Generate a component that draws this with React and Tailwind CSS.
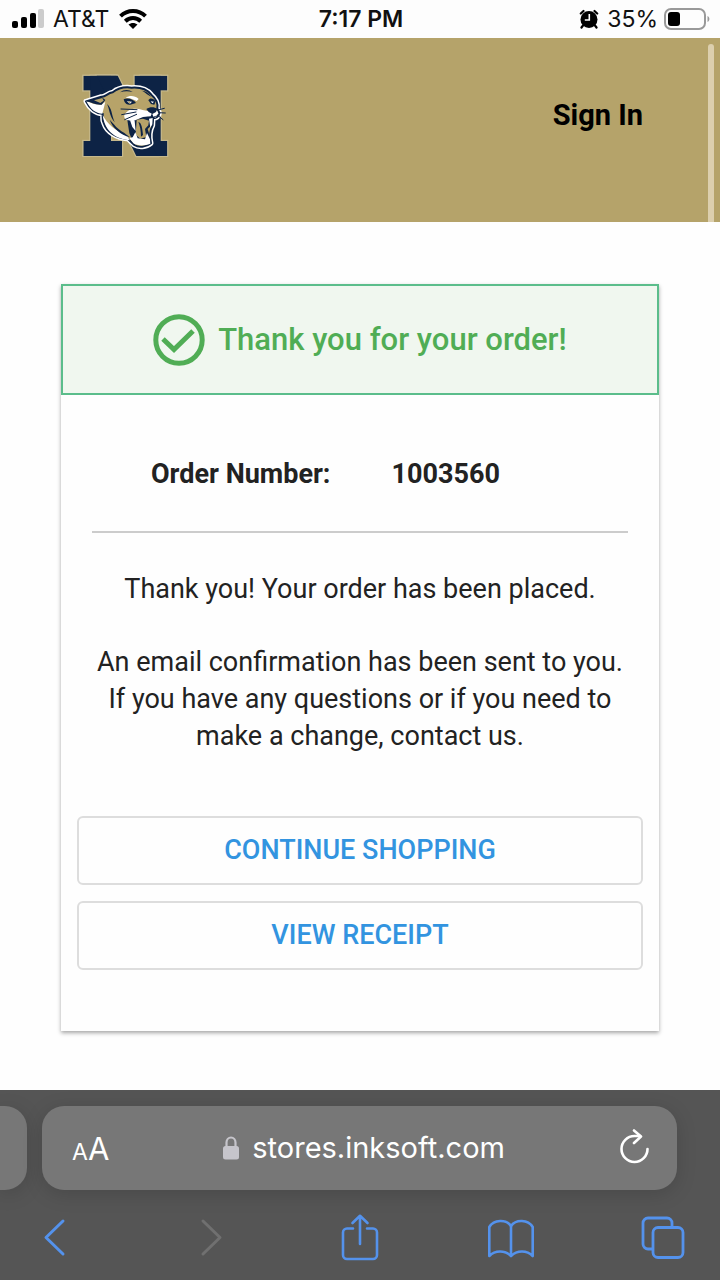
import React from 'react';

const tabs = [
  { id: 'back', label: 'Back', icon: <BackIcon /> },
  { id: 'forward', label: 'Forward', icon: <ForwardIcon />, disabled: true },
  { id: 'share', label: 'Share', icon: <ShareIcon /> },
  { id: 'bookmarks', label: 'Bookmarks', icon: <BookIcon /> },
  { id: 'tabs', label: 'Tabs', icon: <TabsIcon /> },
];

function BackIcon() {
  return (
    <svg width="48" height="48" viewBox="0 0 48 48" fill="none" stroke="currentColor" strokeWidth="3" strokeLinecap="round" strokeLinejoin="round">
      <path d="M31 8 14 24.5 31 41" />
    </svg>
  );
}

function ForwardIcon() {
  return (
    <svg width="48" height="48" viewBox="0 0 48 48" fill="none" stroke="currentColor" strokeWidth="3" strokeLinecap="round" strokeLinejoin="round">
      <path d="M19 8 36 24.5 19 41" />
    </svg>
  );
}

function ShareIcon() {
  return (
    <svg width="48" height="48" viewBox="0 0 48 48" fill="none" stroke="currentColor" strokeWidth="2.6" strokeLinecap="round" strokeLinejoin="round">
      <path d="M17 15.500H11a4 4 0 0 0-4 4V42a4 4 0 0 0 4 4h26a4 4 0 0 0 4-4V19.500a4 4 0 0 0-4-4h-6" />
      <path d="M24 31V3M16.500 10 24 2.800 31.500 10" />
    </svg>
  );
}

function BookIcon() {
  return (
    <svg width="48" height="48" viewBox="0 0 48 48" fill="none" stroke="currentColor" strokeWidth="2.6" strokeLinejoin="round">
      <path d="M23 13C18 6 6 6.500 1.300 14V43C7 37 17 37 23 43 29 37 39 37 44.700 43V14C40 6.500 28 6 23 13Z" />
      <path d="M23 13V43" />
    </svg>
  );
}

function TabsIcon() {
  return (
    <svg width="48" height="48" viewBox="0 0 48 48" fill="none" stroke="currentColor" strokeWidth="2.800">
      <path d="M12 36H8a5 5 0 0 1-5-5V10a5 5 0 0 1 5-5H27a5 5 0 0 1 5 5V14" />
      <rect x="13" y="14.500" width="30" height="30" rx="5" />
    </svg>
  );
}

function SchoolLogo() {
  return (
    <svg width="90" height="88" viewBox="30 28 270 264" role="img" aria-label="School logo">
      <clipPath id="block-inner">
        <rect x="40" y="39" width="252" height="241" />
      </clipPath>
      <clipPath id="block-outer">
        <rect x="36" y="35" width="260" height="249" />
      </clipPath>
      {/* block monogram with its thin light edge */}
      <g fill="#c6b98c" stroke="#c6b98c" strokeWidth="7" clipPath="url(#block-outer)">
        <rect x="40" y="39" width="98" height="44" />
        <rect x="61" y="39" width="62" height="240" />
        <rect x="40" y="235" width="116" height="45" />
        <rect x="194" y="39" width="98" height="44" />
        <rect x="210" y="39" width="62" height="240" />
        <rect x="206" y="235" width="86" height="45" />
        <line x1="102" y1="19" x2="240" y2="300" strokeWidth="63" />
      </g>
      <g fill="#0d2345" clipPath="url(#block-inner)">
        <rect x="40" y="39" width="98" height="44" />
        <rect x="61" y="39" width="62" height="240" />
        <rect x="40" y="235" width="116" height="45" />
        <rect x="194" y="39" width="98" height="44" />
        <rect x="210" y="39" width="62" height="240" />
        <rect x="206" y="235" width="86" height="45" />
        <line x1="102" y1="19" x2="240" y2="300" stroke="#0d2345" strokeWidth="56" />
      </g>
      {/* cougar head */}
      <g strokeLinejoin="round">
        {[['#fff', 15], ['#0d2345', 6]].map(([color, width]) => (
          <path
            key={color}
            d="M48 116 94 102 C106 104 112 91 128 89 C144 76 163 72 185 75 C213 73 233 82 244 96 C258 108 265 121 262 137 L268 151 C266 163 258 166 249 167 L248 188 C239 205 239 225 243 242 C229 254 205 255 193 247 L174 229 C137 225 110 207 102 183 C95 171 99 163 98 153 C78 154 59 139 48 116Z"
            fill="#b7a369"
            stroke={color}
            strokeWidth={width}
          />
        ))}
      </g>
      <path d="M49 116C63 120 73 127 94 126L106 117 97 153C78 153 61 140 49 116Z" fill="#fff" />
      <path d="M48 115 94 102 106 112 95 126C77 128 63 119 48 115Z" fill="#0d2345" />
      <path d="M72 113 97 106 101 114 91 121Z" fill="#b7a369" />
      <path d="M98 157C112 184 137 206 169 216L180 233C141 229 105 210 98 157Z" fill="#fff" />
      <path d="M162 210C144 201 132 185 119 171 129 198 151 215 180 224Z" fill="#0d2345" />
      <path d="M111 124C119 139 117 158 134 179 123 151 127 139 111 124Z" fill="#0d2345" />
      <path d="M150 89C160 80 177 79 188 88 176 85 162 85 150 89Z" fill="#0d2345" />
      <path d="M167 105C178 98 194 98 206 109L200 115 180 107Z" fill="#fff" />
      <path d="M161 110C172 104 190 109 198 121L181 126C169 128 163 120 161 110Z" fill="#0d2345" />
      <path d="M170 116 186 117 180 123Z" fill="#fff" />
      <circle cx="178" cy="119" r="3" fill="#b7a369" />
      <path d="M235 113C241 103 251 109 257 116L253 126 243 124Z" fill="#0d2345" />
      <path d="M242 116 252 117 247 122Z" fill="#fff" />
      <path d="M214 84C225 83 238 92 243 102L231 95C226 90 221 86 214 84Z" fill="#0d2345" />
      <path d="M163 157C174 138 194 134 218 142L237 146 259 142 266 151 256 165 231 162 194 176C176 177 160 172 163 157Z" fill="#fff" />
      <path d="M229 139C239 132 254 132 262 139L258 148 247 154 236 148Z" fill="#0d2345" />
      <path d="M246 151 242 161 219 163 189 176 172 172 178 212 188 235 225 239 240 233 239 218 233 199 249 183 253 165 262 158 250 162Z" fill="#0d2345" />
      <path d="M200 171 219 168 237 174 235 188 225 199 229 223 211 228 197 216Z" fill="#b7a369" />
      <path d="M205 178C215 180 217 197 219 217L213 222C213 204 210 190 205 178Z" fill="#0d2345" />
      <path d="M180 173 194 175 197 205 187 193ZM237 168 248 166 247 185 241 195ZM188 224 196 209 203 227 225 230 231 211 240 230 241 243C224 250 202 250 190 242L178 226Z" fill="#fff" />
      <g stroke="#0d2345" strokeWidth="3" strokeLinecap="round" fill="none">
        <path d="M201 141 153 139M198 148 155 156M200 155 164 171" />
        <path d="M264 142 283 137M265 150 286 151M262 157 279 171" />
      </g>
    </svg>
  );
}

function StatusBar() {
  return (
    <div className="grid h-[38px] grid-cols-3 items-center bg-[#fdfdfd] pl-3 pr-[10px] font-['Inter',sans-serif] text-[23px] leading-7 text-[#111]">
      <div className="flex items-center gap-[9px]">
        <svg width="32" height="20" viewBox="0 0 32 20" fill="#000">
          <rect x="0" y="12" width="6" height="7" rx="2" />
          <rect x="9" y="8" width="6" height="11" rx="2" />
          <rect x="18" y="4" width="6" height="15" rx="2" />
          <rect x="26" y="0" width="6" height="19" rx="2" fill="#ccc" />
        </svg>
        <span>AT&amp;T</span>
        <svg width="30" height="22" viewBox="0 0 30 22" fill="none" stroke="#000" strokeWidth="4">
          <path d="M2.500 8.200C9.500 1.300 20.500 1.300 27.500 8.200" />
          <path d="M7.300 13.200C11.700 9 18.300 9 22.700 13.200" />
          <path d="M15 21 10.500 16.600C13 14.500 17 14.500 19.500 16.600Z" fill="#000" stroke="none" />
        </svg>
      </div>
      <div className="text-center font-semibold">7:17 PM</div>
      <div className="flex items-center justify-end gap-2">
        <svg width="20" height="20" viewBox="0 0 20 20">
          <circle cx="10" cy="10.500" r="8.500" fill="#000" />
          <path d="M1.800 4.500 4.500 2M18.200 4.500 15.500 2M4 16.500 2.500 18.500M16 16.500 17.500 18.500" stroke="#000" strokeWidth="2.200" strokeLinecap="round" />
          <path d="M10.300 5V11H5.800" stroke="#fff" strokeWidth="1.600" fill="none" />
        </svg>
        <div className="flex items-center gap-[6px]">
          <span>35%</span>
          <svg width="46" height="22" viewBox="0 0 46 22">
            <rect x="1" y="1" width="40" height="20" rx="6" fill="none" stroke="#999" strokeWidth="2" />
            <rect x="4" y="4" width="12" height="14" rx="3" fill="#000" />
            <path d="M43.500 8C46 9 46 13 43.500 14Z" fill="#999" />
          </svg>
        </div>
      </div>
    </div>
  );
}

function Header() {
  return (
    <header className="relative flex h-[184px] items-start justify-between bg-[#b5a36a] pl-20 pr-[77px] pt-[34px]">
      <a href="#home">
        <SchoolLogo />
      </a>
      <a href="#signin" className="mt-[25px] text-[29px] font-bold leading-9 text-black">
        Sign In
      </a>
      {/* scroll indicator */}
      <div className="absolute bottom-0 right-[6px] top-[6px] w-[6px] rounded-t-full bg-[#dccfae]" />
    </header>
  );
}

function OrderCard() {
  return (
    <section className="bg-[#fefefe] pb-[61px] text-center text-[27px] leading-[37px] text-[#222] shadow-[0_2px_4px_rgba(0,0,0,0.35)]">
      <div className="flex h-[111px] items-center justify-center gap-[13px] border-2 border-[#5bbd8b] bg-[#f0f7ef] text-[#50ad55]">
        <svg width="52" height="52" viewBox="0 0 52 52" fill="none" stroke="currentColor" strokeWidth="5">
          <circle cx="26" cy="26" r="23.200" />
          <path d="M10 25 21 35.500 40 17" />
        </svg>
        <h1 className="text-[31px] font-medium">Thank you for your order!</h1>
      </div>
      <dl className="mx-[31px] flex gap-[61px] border-b-2 border-[#ccc] pb-[38px] pl-[59px] pt-[61px] font-bold">
        <dt>Order Number:</dt>
        <dd>1003560</dd>
      </dl>
      <div className="flex flex-col gap-9 px-[31px] pb-[61px] pt-[38px]">
        <p>Thank you! Your order has been placed.</p>
        <p>An email confirmation has been sent to you. If you have any questions or if you need to make a change, contact us.</p>
      </div>
      <div className="flex flex-col gap-4 px-4 font-medium text-[#3294e0]">
        <button type="button" className="h-[69px] rounded-md border-2 border-[#ddd]">
          CONTINUE SHOPPING
        </button>
        <button type="button" className="h-[69px] rounded-md border-2 border-[#ddd]">
          VIEW RECEIPT
        </button>
      </div>
    </section>
  );
}

function BrowserBar() {
  return (
    <footer className="h-[190px] overflow-hidden bg-[#555] pt-4 font-['Inter',sans-serif] text-white">
      <div className="flex gap-[15px] pr-[43px]">
        <div className="h-[84px] w-[27px] rounded-r-[22px] bg-[#777] shadow-[0_4px_20px_rgba(0,0,0,0.15)]" />
        <div className="flex h-[84px] flex-1 items-center justify-between rounded-[22px] bg-[#777] pl-[30px] pr-[27px] shadow-[0_4px_20px_rgba(0,0,0,0.15)]">
          <button type="button" aria-label="Page settings" className="flex items-baseline pt-1 leading-9">
            <span className="text-[23px]">A</span>
            <span className="text-[31px]">A</span>
          </button>
          <button type="button" className="flex items-center gap-3 text-[29px] leading-9">
            <svg width="18" height="24" viewBox="0 0 18 24">
              <path d="M4.500 11V6.500a4.500 5 0 0 1 9 0V11" fill="none" stroke="#c6c5cb" strokeWidth="2.200" />
              <rect x="1" y="10" width="16" height="13.500" rx="2.500" fill="#c6c5cb" />
            </svg>
            <span>stores.inksoft.com</span>
          </button>
          <button type="button" aria-label="Reload">
            <svg width="32" height="38" viewBox="0 0 32 38" fill="none" stroke="currentColor" strokeWidth="2.600" strokeLinecap="round" strokeLinejoin="round">
              <path d="M29.500 20A13 13 0 1 1 16.500 7H22" />
              <path d="M16 1.500 23 7.500 16 14" />
            </svg>
          </button>
        </div>
      </div>
      <nav className="mt-[23px] flex justify-between px-8 text-[#5492ec]">
        {tabs.map((tab) => (
          <button key={tab.id} type="button" aria-label={tab.label} disabled={tab.disabled} className="disabled:text-[#707070]">
            {tab.icon}
          </button>
        ))}
      </nav>
    </footer>
  );
}

function App() {
  return (
    <div className="flex min-h-screen flex-col bg-[#fefefe] font-['Roboto',sans-serif]">
      <StatusBar />
      <Header />
      <main className="flex-1 px-[61px] pb-[59px] pt-[62px]">
        <OrderCard />
      </main>
      <BrowserBar />
    </div>
  );
}

export default App;
